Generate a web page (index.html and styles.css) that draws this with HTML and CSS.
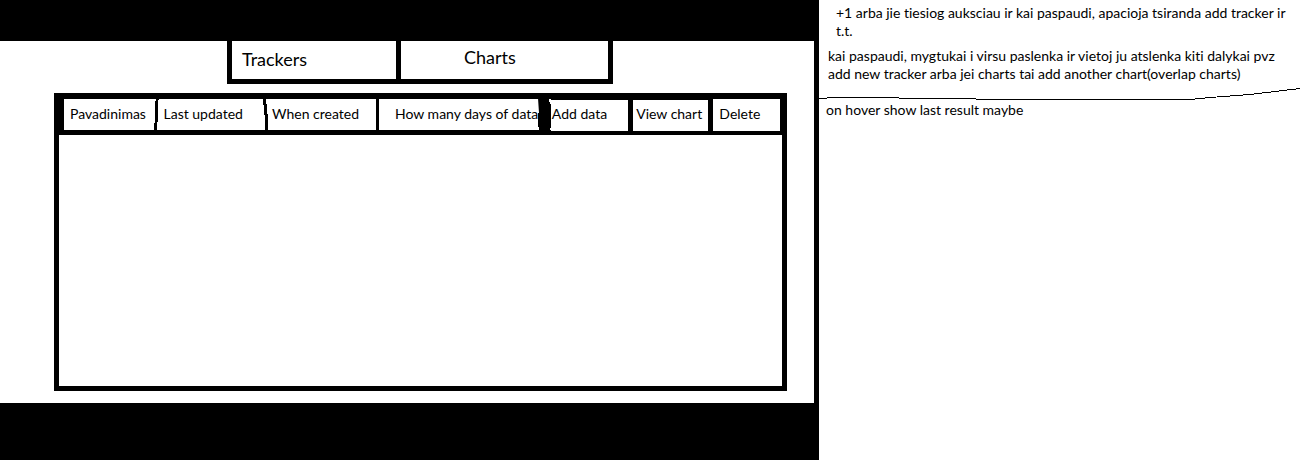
FILE: index.html
```
<!DOCTYPE html>
<html lang="lt">
<head>
<meta charset="utf-8">
<title>Trackers</title>
<link rel="stylesheet" href="styles.css">
</head>
<body>
<div class="page">
  <div class="app">
    <header class="bar bar-top"></header>
    <main class="content">
      <nav class="tabs">
        <button class="tab tab-trackers" type="button">Trackers</button>
        <button class="tab tab-charts" type="button">Charts</button>
      </nav>
      <section class="panel">
        <div class="panel-head">
          <table class="trackers">
            <thead>
              <tr>
                <th class="col-name" scope="col">Pavadinimas
                  <svg class="stroke" viewBox="0 0 6 33" aria-hidden="true"><path d="M3 0h3v2h-1v22h-1v9h-3v-8h1v-22h1z"/></svg>
                </th>
                <th class="col-updated" scope="col">Last updated
                  <svg class="stroke" viewBox="0 0 6 33" aria-hidden="true"><path d="M1 0h3v6h1v10h1v17h-3v-16h-1v-10h-1z"/></svg>
                </th>
                <th class="col-created" scope="col">When created</th>
                <th class="col-days" scope="col">How many days of data
                  <svg class="blob" viewBox="0 0 14 37" aria-hidden="true"><path d="M1 0h4v1h1v-1h4v1h2v3h1v2h1v24h-1v3h-2v3h-6v1h-1v-1h-2v-7h-1v-14h1z"/></svg>
                </th>
                <th class="col-add" scope="col">Add data</th>
                <th class="col-view" scope="col">View chart</th>
                <th class="col-delete" scope="col">Delete</th>
              </tr>
            </thead>
          </table>
        </div>
      </section>
    </main>
    <footer class="bar bar-bottom"></footer>
  </div>
  <aside class="notes">
    <p class="note note-first">+1 arba jie tiesiog auksciau ir kai paspaudi, apacioja tsiranda add tracker ir t.t.</p>
    <p class="note note-second">kai paspaudi, mygtukai i virsu paslenka ir vietoj ju atslenka kiti dalykai pvz add new tracker arba jei charts tai add another chart(overlap charts)</p>
    <svg class="divider" viewBox="0 0 481 12" preserveAspectRatio="none" shape-rendering="crispEdges" aria-hidden="true"><path d="M0 10.5H8M8 9.5H80M80 10.5H157M157 11.5H371L391 9.5L431 6.5L481 .5" fill="none" stroke="#000"/></svg>
    <p class="note note-third">on hover show last result maybe</p>
  </aside>
</div>
</body>
</html>
```
FILE: styles.css
```
* {
  box-sizing: border-box;
}

body {
  margin: 0;
  background: #fff;
  color: #000;
  font-family: Lato, "Open Sans", sans-serif;
  font-size: 14px;
  font-variant-ligatures: none;
  line-height: 18px;
}

.page {
  display: flex;
  min-height: 100vh;
}

.app {
  flex: none;
  width: 63%;
  display: flex;
  flex-direction: column;
  border-right: 5px solid #000;
}

.bar {
  background: #000;
}

.bar-top {
  height: 41px;
}

.bar-bottom {
  height: 57px;
}

.content {
  flex: 1;
  display: flex;
  flex-direction: column;
  gap: 9px;
  padding: 0 27px 12px 54px;
}

.tabs {
  display: flex;
  width: 386px;
  margin-left: 173px;
  border: 5px solid #000;
  border-top: 0;
}

.tab {
  height: 38px;
  padding: 0 10px 2px;
  border: 0;
  background: #fff;
  color: #000;
  font: inherit;
  font-size: 18px;
  text-align: left;
}

.tab-trackers {
  width: 169px;
  flex: none;
  border-right: 5px solid #000;
}

.tab-charts {
  flex: 1;
  padding: 0 0 6px 63px;
}

.panel {
  flex: 1;
  border: 5px solid #000;
}

.panel-head {
  padding: 1px 2px 4px 5px;
  background: #000;
}

.trackers {
  width: 100%;
  table-layout: fixed;
  border-collapse: separate;
  border-spacing: 0;
}

.trackers th {
  position: relative;
  height: 32px;
  padding: 0 0 2px 6px;
  border: 0 solid #000;
  background: #fff;
  font-weight: 400;
  text-align: left;
  white-space: nowrap;
}

.trackers .col-name {
  width: 13.2%;
  border-bottom-width: 1px;
}

.trackers .col-updated {
  width: 15.3%;
  padding-left: 5px;
  border-bottom-width: 1px;
}

.trackers .col-created {
  width: 15.5%;
  padding-left: 4px;
  border-width: 0 3px 1px 0;
}

.trackers .col-days {
  width: 24%;
  padding-left: 16px;
  border-bottom-width: 1px;
}

.trackers .col-add {
  width: 11.5%;
  padding: 0 0 4px 1px;
  border-width: 1px 5px 0 0;
}

.trackers .col-view {
  width: 11.2%;
  padding: 0 0 4px 3px;
  border-width: 1px 5px 0 0;
}

.trackers .col-delete {
  width: 9.3%;
}

.stroke {
  position: absolute;
  top: -1px;
  right: 0;
  width: 6px;
  height: 33px;
}

.blob {
  position: absolute;
  top: -1px;
  right: 0;
  width: 14px;
  height: 37px;
}

.notes {
  flex: 1;
  padding-top: 4px;
}

.note {
  margin: 0;
}

.note-first {
  padding: 0 8px 0 17px;
}

.note-second {
  margin-top: 7px;
  padding: 0 8px 0 9px;
}

.divider {
  display: block;
  width: 100%;
  height: 12px;
  margin-top: 5px;
}

.note-third {
  margin-top: 1px;
  padding-left: 7px;
}
```
